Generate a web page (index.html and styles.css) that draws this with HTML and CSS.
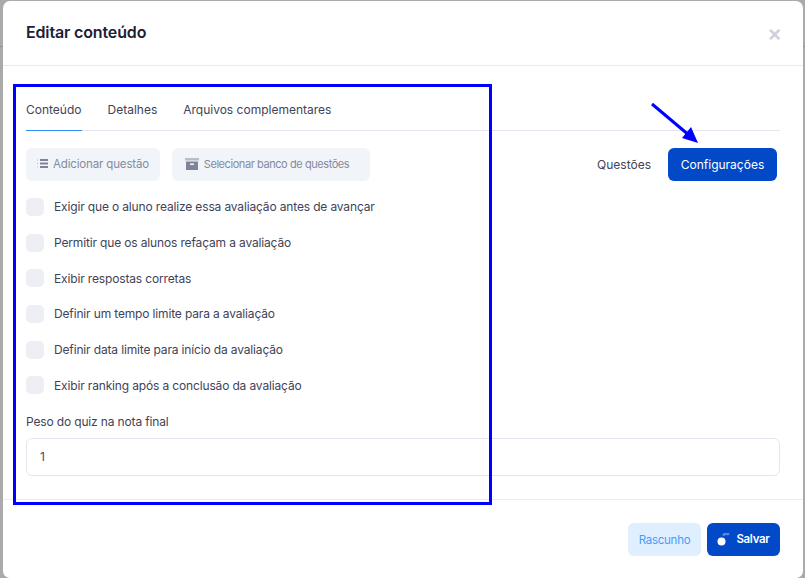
FILE: index.html
```html
<!DOCTYPE html>
<html lang="pt">
<head>
<meta charset="utf-8">
<title>Editar conteúdo</title>
<link rel="stylesheet" href="styles.css">
</head>
<body>
<div class="backdrop-line"></div>
<div class="modal">
  <header class="modal-header">
    <h1 class="modal-title">Editar conteúdo</h1>
    <span class="close">×</span>
  </header>
  <main class="modal-body">
    <nav class="tabs">
      <span class="tab active">Conteúdo</span>
      <span class="tab">Detalhes</span>
      <span class="tab">Arquivos complementares</span>
    </nav>
    <div class="toolbar">
      <div class="actions">
        <button class="btn btn-muted btn-add">
          <svg class="icon" width="12" height="12" viewBox="0 0 12 12"><path d="M0 2h1M0 5.500h1M0 9h1" stroke="#b5b9c6" stroke-width="1.2"/><path d="M3 2h8M3 5.500h8M3 9h8" stroke="#7f8498" stroke-width="1.8"/></svg>
          Adicionar questão
        </button>
        <button class="btn btn-muted btn-bank">
          <svg class="icon" width="14" height="14" viewBox="0 0 14 14"><path d="M0 1h14v2.500H0z" fill="#b9bcc9"/><path d="M1 4.500h12V13H1z" fill="#7f8498"/><path d="M5 6.500h4v1.400H5z" fill="#fff"/></svg>
          Selecionar banco de questões
        </button>
      </div>
      <div class="views">
        <span class="view-link">Questões</span>
        <button class="btn btn-primary btn-config">Configurações</button>
      </div>
    </div>
    <ul class="options">
      <li class="option"><span class="check"></span>Exigir que o aluno realize essa avaliação antes de avançar</li>
      <li class="option"><span class="check"></span>Permitir que os alunos refaçam a avaliação</li>
      <li class="option"><span class="check"></span>Exibir respostas corretas</li>
      <li class="option"><span class="check"></span>Definir um tempo limite para a avaliação</li>
      <li class="option"><span class="check"></span>Definir data limite para início da avaliação</li>
      <li class="option"><span class="check"></span>Exibir ranking após a conclusão da avaliação</li>
    </ul>
    <label class="field-label">Peso do quiz na nota final</label>
    <div class="input">1</div>
  </main>
  <footer class="modal-footer">
    <button class="btn btn-light">Rascunho</button>
    <button class="btn btn-primary btn-save">
      <svg class="spinner" width="13" height="13" viewBox="0 0 13 13"><path d="M6 2.500A4.500 4.500 0 0 1 12 1.500" fill="none" stroke="#5f86d8" stroke-width="2.600"/><circle cx="4.500" cy="8.500" r="4" fill="#fff"/></svg>
      Salvar
    </button>
  </footer>
</div>
<div class="highlight"></div>
<svg class="arrow" width="60" height="50" viewBox="0 0 60 50"><path d="M2 2L40 34" stroke="#0000ff" stroke-width="3" fill="none"/><path d="M48 41L32 36L41 25z" fill="#0000ff"/></svg>
</body>
</html>
```

FILE: styles.css
```css
* { box-sizing: border-box; }
html, body { margin: 0; padding: 0; height: 100%; overflow: hidden; }
body {
  background: #aaaaaa;
  font-family: "Inter", "Liberation Sans", sans-serif;
  font-size: 12px;
  letter-spacing: -0.15px;
  color: #3a3f55;
  padding: 1px 2px 0 3px;
}
.backdrop-line {
  position: absolute; left: 0; right: 0; top: 46px; height: 1px; background: #949494;
}
.modal {
  position: relative;
  height: 577px;
  background: #fff;
  border-radius: 7px;
  display: flex;
  flex-direction: column;
}
.modal-header {
  height: 65px;
  flex: none;
  border-bottom: 1px solid #e9e9ef;
  padding: 0 23px;
  display: flex;
  align-items: center;
  justify-content: space-between;
}
.modal-title { margin: 0; font-size: 16px; letter-spacing: -0.15px; font-weight: 600; color: #1c2036; position: relative; top: -1px; }
.close { color: #cfd0d6; font-size: 22px; font-weight: 600; line-height: 1; position: relative; right: -2px; }
.modal-body { flex: 1; padding: 0 23px; }
.tabs { display: flex; gap: 26px; height: 65px; border-bottom: 1px solid #e4e5ee; }
.tab { height: 65px; padding-top: 35px; line-height: 18px; color: #3f4359; letter-spacing: 0; }
.tab.active { border-bottom: 1px solid #2f8dfa; }
.toolbar { display: flex; justify-content: space-between; margin-top: 17px; padding-right: 3px; }
.actions { display: flex; gap: 12px; }
.views { display: flex; align-items: center; gap: 17px; }
.view-link { color: #3f4359; letter-spacing: 0; }
.btn {
  height: 33px;
  border: 0;
  border-radius: 6px;
  font: inherit;
  letter-spacing: inherit;
  display: inline-flex;
  align-items: center;
  justify-content: center;
  padding: 0;
}
.btn-muted { background: #f1f4f8; color: #858a9e; font-size: 11.5px; padding-bottom: 1px; }
.btn-add { width: 134px; gap: 4px; }
.btn-bank { width: 198px; gap: 5px; padding-right: 8px; font-size: 11px; letter-spacing: -0.43px; }
.btn-primary { background: #0149c7; color: #fff; }
.btn-config { width: 109px; letter-spacing: 0; }
.btn-light { background: #e0efff; color: #4a9bf5; width: 73px; font-size: 11.5px; letter-spacing: -0.25px; }
.btn-save { width: 73px; font-weight: 600; gap: 6px; font-size: 11.5px; letter-spacing: -0.3px; padding-bottom: 1px; }
.options { list-style: none; margin: 8px 0 0; padding: 0; }
.option { display: flex; align-items: center; height: 35.7px; gap: 10px; color: #3f4359; }
.check { width: 18px; height: 18px; border-radius: 5px; background: #eeeff5; flex: none; }
.field-label { display: block; margin-top: 10px; line-height: 18px; color: #3f4359; }
.input {
  margin-top: 7px;
  height: 38px;
  border: 1px solid #e4e5ee;
  border-radius: 6px;
  padding: 0 13px;
  line-height: 36px;
  color: #4a4d60;
}
.modal-footer {
  height: 79px;
  flex: none;
  border-top: 1px solid #ebebf0;
  padding: 23px 23px 0 0;
  display: flex;
  justify-content: flex-end;
  gap: 6px;
}
.highlight {
  position: absolute; left: 13px; top: 84px; width: 479px; height: 421px; border: 3px solid #0000ff;
}
.arrow { position: absolute; left: 650px; top: 102px; }
```
